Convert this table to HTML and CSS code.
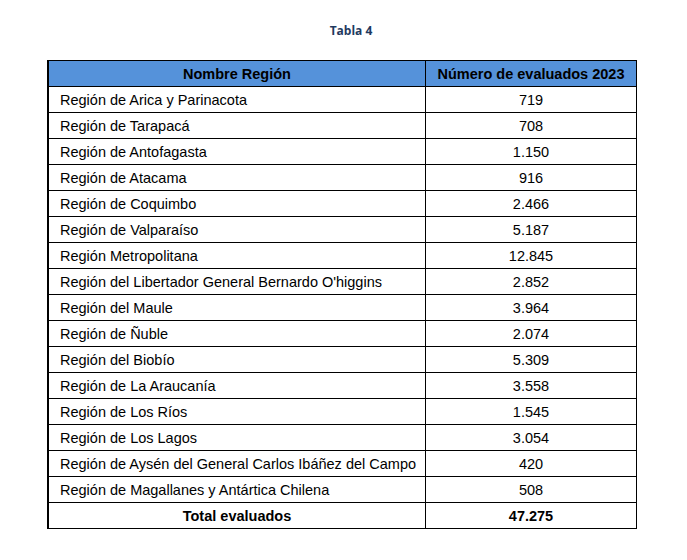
FILE: index.html
```html
<!DOCTYPE html>
<html lang="es">
<head>
<meta charset="utf-8">
<title>Tabla 4</title>
<link rel="stylesheet" href="styles.css">
</head>
<body>
<div class="page">
  <div class="caption">Tabla 4</div>
  <table class="data">
    <thead>
      <tr><th class="c-name">Nombre Región</th><th class="c-num">Número de evaluados 2023</th></tr>
    </thead>
    <tbody>
      <tr><td>Región de Arica y Parinacota</td><td class="num">719</td></tr>
      <tr><td>Región de Tarapacá</td><td class="num">708</td></tr>
      <tr><td>Región de Antofagasta</td><td class="num">1.150</td></tr>
      <tr><td>Región de Atacama</td><td class="num">916</td></tr>
      <tr><td>Región de Coquimbo</td><td class="num">2.466</td></tr>
      <tr><td>Región de Valparaíso</td><td class="num">5.187</td></tr>
      <tr><td>Región Metropolitana</td><td class="num">12.845</td></tr>
      <tr><td>Región del Libertador General Bernardo O'higgins</td><td class="num">2.852</td></tr>
      <tr><td>Región del Maule</td><td class="num">3.964</td></tr>
      <tr><td>Región de Ñuble</td><td class="num">2.074</td></tr>
      <tr><td>Región del Biobío</td><td class="num">5.309</td></tr>
      <tr><td>Región de La Araucanía</td><td class="num">3.558</td></tr>
      <tr><td>Región de Los Ríos</td><td class="num">1.545</td></tr>
      <tr><td>Región de Los Lagos</td><td class="num">3.054</td></tr>
      <tr><td>Región de Aysén del General Carlos Ibáñez del Campo</td><td class="num">420</td></tr>
      <tr><td>Región de Magallanes y Antártica Chilena</td><td class="num">508</td></tr>
      <tr class="total"><td>Total evaluados</td><td class="num">47.275</td></tr>
    </tbody>
  </table>
</div>
</body>
</html>
```
FILE: styles.css
```css
html, body {
  margin: 0;
  padding: 0;
  background: #ffffff;
}
.page {
  padding: 23px 0 0 47px;
}
.caption {
  width: 588px;
  padding-left: 20px;
  box-sizing: border-box;
  text-align: center;
  font-family: "Open Sans", "Noto Sans", sans-serif;
  font-weight: 700;
  font-size: 12px;
  line-height: 16px;
  color: #1f3a5f;
  margin-bottom: 21px;
}
.data {
  border-collapse: collapse;
  width: 587px;
  table-layout: fixed;
  font-family: "Liberation Sans", Arial, sans-serif;
  font-size: 14.5px;
  color: #000;
}
.data th, .data td {
  border: 1px solid #000;
  height: 24px;
  padding: 1px 0 0 11px;
  line-height: 24px;
  white-space: nowrap;
  text-align: left;
}
.data th {
  background: #5592da;
  font-weight: 700;
  text-align: center;
  padding: 1px 0 0 0;
}
.data .c-name { width: 376px; }
.data .c-num { width: 210px; }
.data td.num {
  text-align: center;
  padding-left: 0;
}
.data tr.total td {
  font-weight: 700;
  text-align: center;
  padding-left: 0;
}
.data tr > :first-child { border-left-width: 2px; }
```
